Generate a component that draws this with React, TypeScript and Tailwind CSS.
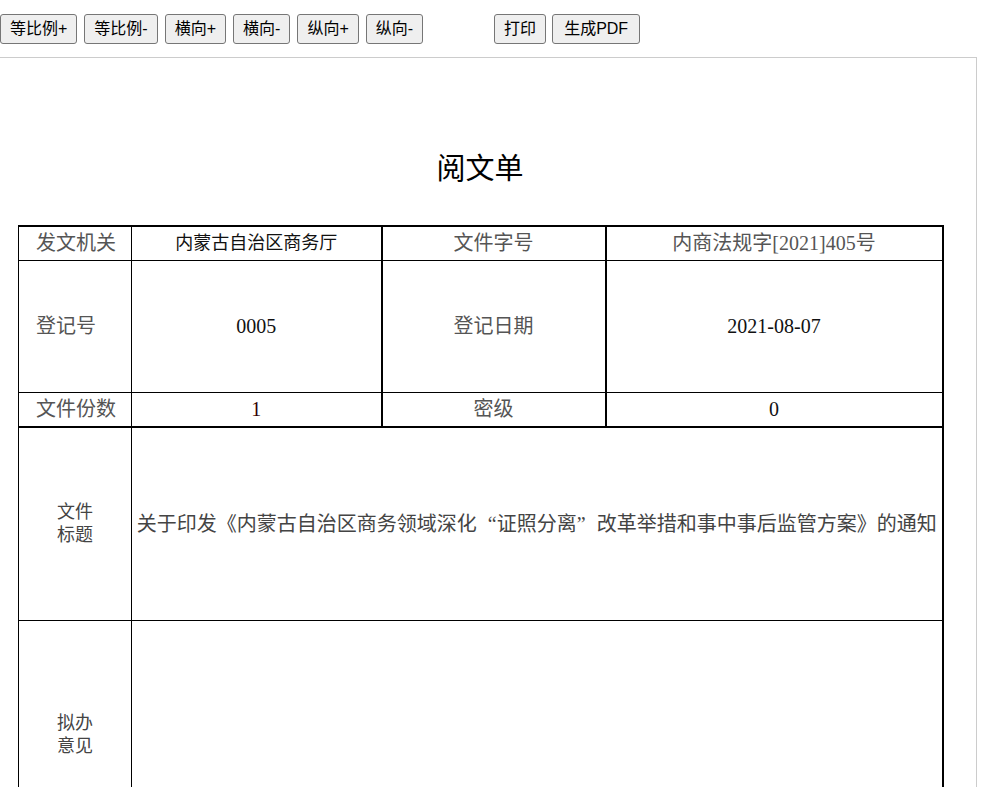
import React from 'react';

const sans = "font-['Liberation_Sans','Noto_Sans_CJK_SC',sans-serif]";
const serif = "font-['Liberation_Serif','Noto_Sans_CJK_SC',serif]";

const buttons = ['等比例+', '等比例-', '横向+', '横向-', '纵向+', '纵向-'];

function ToolButton({ label, className = '' }: { label: string; className?: string }) {
  return (
    <button
      className={`h-[30px] px-[9px] border border-[#767676] rounded-[3px] bg-[#efefef] text-[16px] leading-[20px] text-black ${className}`}
    >
      {label}
    </button>
  );
}

export default function App() {
  const label = 'text-[20px] text-[#555]';
  const value = 'text-[18px] text-[#111]';
  const digits = 'text-[20px] text-[#111]';

  return (
    <div className={`min-h-screen bg-white ${sans}`}>
      {/* toolbar */}
      <div className="flex items-center gap-[7px] pt-[14px]">
        {buttons.map((b) => (
          <ToolButton key={b} label={b} />
        ))}
        <ToolButton label="打印" className="ml-[64px]" />
        <ToolButton label="生成PDF" className="-ml-[1px] px-[11px]" />
      </div>

      {/* page */}
      <div className="mt-[13px] w-[977px] border-t border-r border-[#cccccc] pl-[18px] pb-[40px]">
        <div className="w-[924px] mt-[91px] h-[40px] leading-[40px] text-center text-[29px] text-black">
          阅文单
        </div>

        <table className={`mt-[36px] w-[924px] table-fixed border-collapse ${serif}`}>
          <colgroup>
            <col className="w-[113px]" />
            <col className="w-[250px]" />
            <col className="w-[224px]" />
            <col className="w-[337px]" />
          </colgroup>
          <tbody>
            <tr className="h-[34px]">
              <td className={`border-t-2 border-l border-b border-r border-black pl-[17px] ${label}`}>发文机关</td>
              <td className={`border-t-2 border-b border-black text-center ${value}`}>内蒙古自治区商务厅</td>
              <td className={`border-t-2 border-x-2 border-b border-black text-center ${label}`}>文件字号</td>
              <td className={`border-t-2 border-r-2 border-b border-black text-center ${label}`}>内商法规字[2021]405号</td>
            </tr>
            <tr className="h-[132px]">
              <td className={`border-l border-b border-r border-black pl-[17px] ${label}`}>登记号</td>
              <td className={`border-b border-black text-center ${digits}`}>0005</td>
              <td className={`border-x-2 border-b border-black text-center ${label}`}>登记日期</td>
              <td className={`border-r-2 border-b border-black text-center ${digits}`}>2021-08-07</td>
            </tr>
            <tr className="h-[35px]">
              <td className={`border-l border-b-2 border-r border-black pl-[17px] ${label}`}>文件份数</td>
              <td className="border-b-2 border-black text-center text-[20px] text-[#330000]">1</td>
              <td className={`border-x-2 border-b-2 border-black text-center ${label}`}>密级</td>
              <td className={`border-r-2 border-b-2 border-black text-center ${digits}`}>0</td>
            </tr>
          </tbody>
        </table>

        <table className={`w-[924px] table-fixed border-collapse ${serif}`}>
          <colgroup>
            <col className="w-[113px]" />
            <col className="w-[811px]" />
          </colgroup>
          <tbody>
            <tr className="h-[192px]">
              <td className="border-l border-b border-r border-black text-center leading-[23px] text-[18px] text-[#444]">
                文件
                <br />
                标题
              </td>
              <td className="border-r-2 border-b border-black text-center whitespace-nowrap text-[20px] text-[#444]">
                关于印发《内蒙古自治区商务领域深化
                <span className="inline-block w-[20px] text-right">“</span>
                证照分离
                <span className="inline-block w-[20px] text-left">”</span>
                改革举措和事中事后监管方案》的通知
              </td>
            </tr>
            <tr className="h-[230px]">
              <td className="border-l border-b border-r border-black text-center leading-[23px] text-[18px] text-[#444]">
                拟办
                <br />
                意见
              </td>
              <td className="border-r-2 border-b border-black" />
            </tr>
          </tbody>
        </table>
      </div>
    </div>
  );
}
